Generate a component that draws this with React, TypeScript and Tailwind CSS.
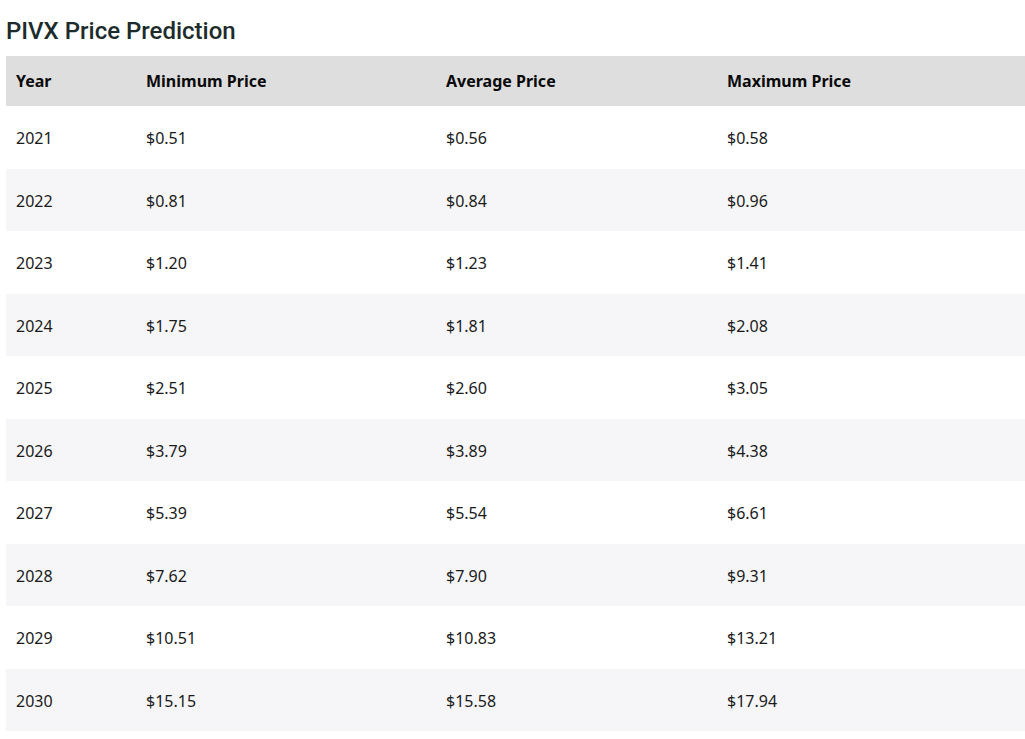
const rows = [
  ["2021", "$0.51", "$0.56", "$0.58"],
  ["2022", "$0.81", "$0.84", "$0.96"],
  ["2023", "$1.20", "$1.23", "$1.41"],
  ["2024", "$1.75", "$1.81", "$2.08"],
  ["2025", "$2.51", "$2.60", "$3.05"],
  ["2026", "$3.79", "$3.89", "$4.38"],
  ["2027", "$5.39", "$5.54", "$6.61"],
  ["2028", "$7.62", "$7.90", "$9.31"],
  ["2029", "$10.51", "$10.83", "$13.21"],
  ["2030", "$15.15", "$15.58", "$17.94"],
];

export default function App() {
  return (
    <div className="bg-white min-h-screen pl-[6px] font-['Noto_Sans',sans-serif] text-[#1a1a1a]">
      <h2 className="pt-[16px] pb-[10px] text-[24px] leading-[30px] font-medium font-['Roboto',sans-serif] text-[#1c2b2b]">
        PIVX Price Prediction
      </h2>
      <table className="w-[1019px] border-collapse table-fixed text-[16px] leading-[24px]">
        <colgroup>
          <col className="w-[130px]" />
          <col className="w-[300px]" />
          <col className="w-[281px]" />
          <col />
        </colgroup>
        <thead>
          <tr className="bg-[#dedede] h-[50px]">
            <th className="text-left font-bold px-[10px] pb-[1px] text-[#0a0a0a]">Year</th>
            <th className="text-left font-bold px-[10px] pb-[1px] text-[#0a0a0a]">Minimum Price</th>
            <th className="text-left font-bold px-[10px] pb-[1px] text-[#0a0a0a]">Average Price</th>
            <th className="text-left font-bold px-[10px] pb-[1px] text-[#0a0a0a]">Maximum Price</th>
          </tr>
        </thead>
        <tbody>
          {rows.map((r, i) => (
            <tr key={r[0]} className={`h-[62.5px] ${i % 2 ? "bg-[#f6f6f8]" : "bg-white"}`}>
              {r.map((c, j) => (
                <td key={j} className="px-[10px] pt-[2px]">
                  {c}
                </td>
              ))}
            </tr>
          ))}
        </tbody>
      </table>
    </div>
  );
}
